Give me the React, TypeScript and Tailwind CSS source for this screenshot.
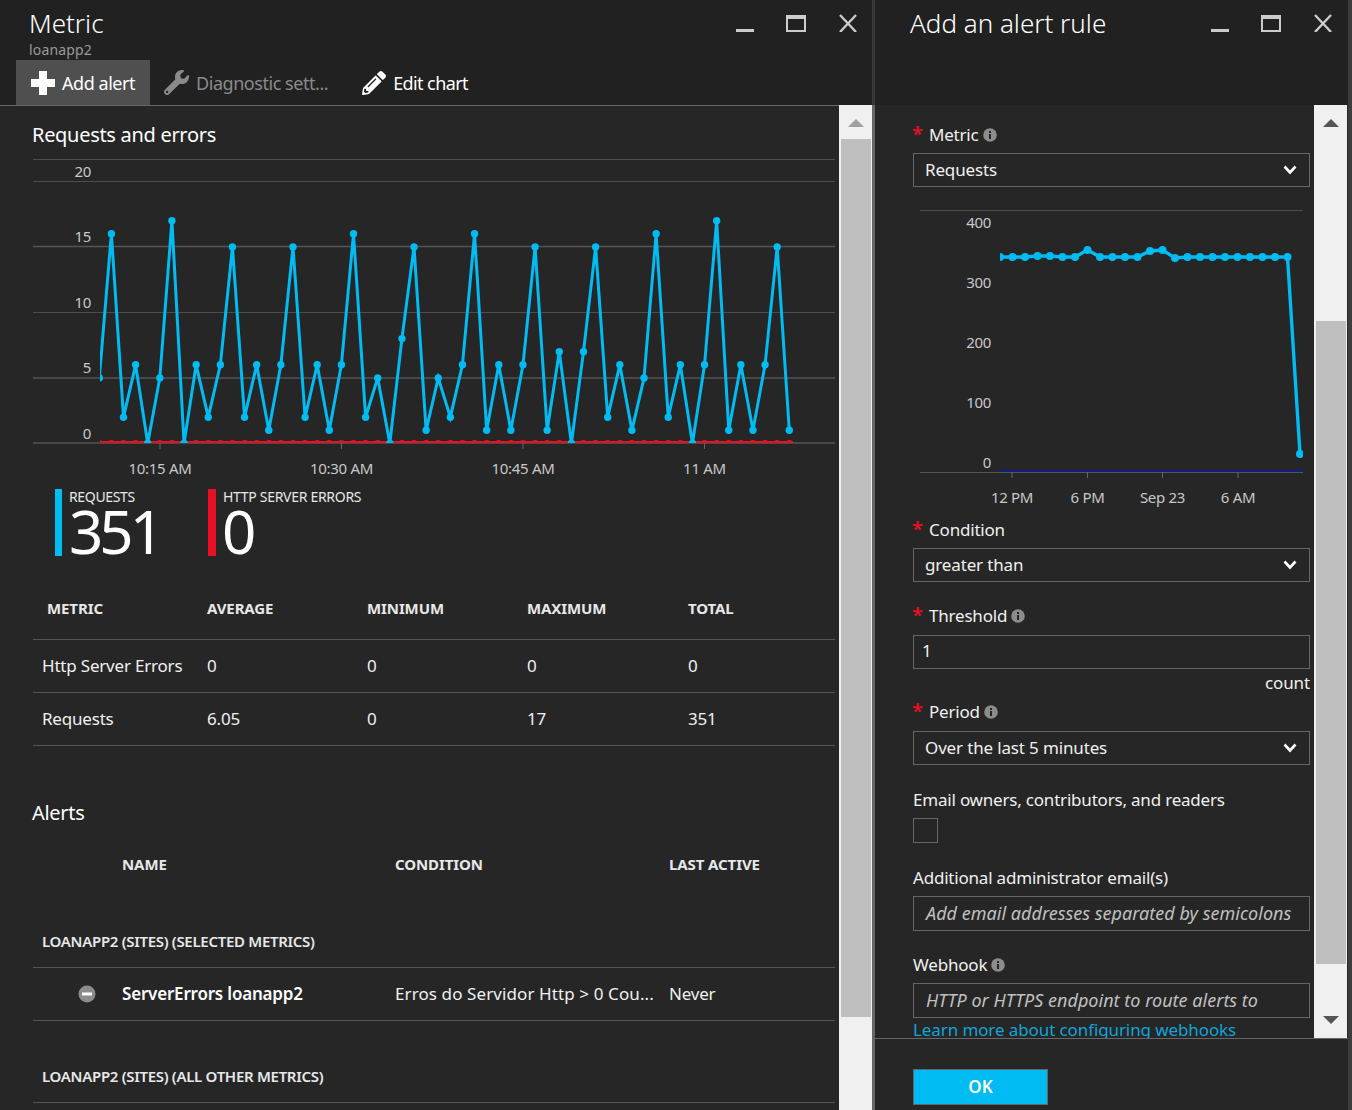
import { FaPencilAlt, FaWrench } from "react-icons/fa";

const requests = [
  5, 16, 2, 6, 0, 5, 17, 0, 6, 2, 6, 15, 2, 6, 1, 6, 15, 2, 6, 1, 6, 16, 2, 5, 0, 8, 15, 1, 5, 2, 6, 16, 1, 6, 1, 6, 15,
  1, 7, 0, 7, 15, 2, 6, 1, 5, 16, 2, 6, 0, 6, 17, 1, 6, 1, 6, 15, 1,
];

const ruleY = [257, 257, 257, 256, 256, 257, 257, 250, 257, 257, 257, 257, 251, 250, 258, 257, 257, 257, 257, 257, 257, 257, 257, 257, 454];

const metricRows = [
  ["Http Server Errors", "0", "0", "0", "0"],
  ["Requests", "6.05", "0", "17", "351"],
];

function RequestsChart() {
  const pts = requests.map((v, i) => ({ x: 99.3 + i * 12.105, y: 443.4 - v * 13.1 }));
  return (
    <svg viewBox="33 155 802 325" width={802} height={325} className="block">
      <defs>
        <clipPath id="plot">
          <rect x="100" y="155" width="735" height="288" />
        </clipPath>
      </defs>
      {[159, 181, 312].map((y) => (
        <line key={y} x1="33" x2="835" y1={y + 0.5} y2={y + 0.5} stroke="#4d4d4d" />
      ))}
      {[246.5, 378, 443].map((y) => (
        <line key={y} x1="33" x2="835" y1={y} y2={y} stroke="#555" strokeWidth="1.5" />
      ))}
      {[160, 341.5, 523, 704.5].map((x) => (
        <line key={x} x1={x} x2={x} y1="443" y2="449" stroke="#666" />
      ))}
      {[
        ["20", 177],
        ["15", 242],
        ["10", 308],
        ["5", 373],
        ["0", 439],
      ].map(([t, y]) => (
        <text key={t} x="91" y={y} textAnchor="end" fontSize="15" letterSpacing="-0.3" fill="#c8c8c8">
          {t}
        </text>
      ))}
      {[
        ["10:15 AM", 160],
        ["10:30 AM", 341.5],
        ["10:45 AM", 523],
        ["11 AM", 704.5],
      ].map(([t, x]) => (
        <text key={t} x={x} y="473.5" textAnchor="middle" fontSize="15" fill="#c8c8c8" letterSpacing="-0.3">
          {t}
        </text>
      ))}
      <g clipPath="url(#plot)">
        <line x1="100" x2="793" y1="442" y2="442" stroke="#e81123" strokeWidth="2" />
        {pts.map((p, i) => (
          <circle key={i} cx={p.x} cy="443.4" r="3.5" fill="#e81123" />
        ))}
        <polyline points={pts.map((p) => `${p.x},${p.y}`).join(" ")} fill="none" stroke="#00bcf2" strokeWidth="3" />
        {pts.map((p, i) => (
          <circle key={i} cx={p.x} cy={p.y} r="3.7" fill="#00bcf2" />
        ))}
      </g>
    </svg>
  );
}

function RuleChart() {
  const pts = ruleY.map((y, i) => ({ x: 1000 + i * 12.5, y }));
  return (
    <svg viewBox="913 205 397 305" width={397} height={305} className="block">
      <defs>
        <clipPath id="ruleplot">
          <rect x="1000" y="205" width="303" height="270" />
        </clipPath>
      </defs>
      <line x1="920" x2="1303" y1="210.5" y2="210.5" stroke="#4d4d4d" />
      <line x1="920" x2="1303" y1="472.5" y2="472.5" stroke="#555" />
      <line x1="1000" x2="1303" y1="471" y2="471" stroke="#0f1c8a" strokeWidth="2" />
      {[1012, 1087.5, 1162.5, 1238].map((x) => (
        <line key={x} x1={x} x2={x} y1="472" y2="478" stroke="#666" />
      ))}
      {[
        ["400", 228],
        ["300", 288],
        ["200", 348],
        ["100", 408],
        ["0", 468],
      ].map(([t, y]) => (
        <text key={t} x="991" y={y} textAnchor="end" fontSize="15" letterSpacing="-0.3" fill="#c8c8c8">
          {t}
        </text>
      ))}
      {[
        ["12 PM", 1012],
        ["6 PM", 1087.5],
        ["Sep 23", 1162.5],
        ["6 AM", 1238],
      ].map(([t, x]) => (
        <text key={t} x={x} y="502.5" textAnchor="middle" fontSize="15" fill="#c8c8c8" letterSpacing="-0.3">
          {t}
        </text>
      ))}
      <g clipPath="url(#ruleplot)">
        <polyline points={pts.map((p) => `${p.x},${p.y}`).join(" ")} fill="none" stroke="#00bcf2" strokeWidth="3.4" />
        {pts.map((p, i) => (
          <circle key={i} cx={p.x} cy={p.y} r="4" fill="#00bcf2" />
        ))}
      </g>
    </svg>
  );
}

function WindowControls() {
  return (
    <div className="flex items-start">
      <svg width="18" height="32" className="block" fill="#cccccc">
        <rect x="0" y="29" width="18" height="3" />
      </svg>
      <svg width="20" height="32" className="ml-[32px] block">
        <rect x="0" y="15" width="20" height="17" fill="#cccccc" />
        <rect x="2" y="19" width="16" height="11" fill="#212121" />
      </svg>
      <svg width="18" height="32" className="ml-[33px] block" stroke="#cccccc" strokeWidth="2.4">
        <line x1="1" y1="15" x2="17" y2="32" />
        <line x1="17" y1="15" x2="1" y2="32" />
      </svg>
    </div>
  );
}

function Scrollbar({ arrow, thumbTop, thumbHeight, thumbX }: { arrow: string; thumbTop: string; thumbHeight: string; thumbX: string }) {
  return (
    <div className="flex h-full w-[33px] shrink-0 flex-col bg-[#f0f0f0]">
      <svg width="16" height="8" className="mt-[14px] ml-[9px] block shrink-0" fill={arrow}>
        <polygon points="0,8 8,0 16,8" />
      </svg>
      <div className={`${thumbTop} ${thumbHeight} ${thumbX} w-[30px] shrink-0 bg-[#bfbfbf]`} />
    </div>
  );
}

function Info() {
  return (
    <svg width="14" height="14" viewBox="0 0 14 14" className="ml-[4px] block shrink-0">
      <circle cx="7" cy="7" r="6.8" fill="#8c8c8c" />
      <rect x="6" y="6" width="2" height="5" fill="#262626" />
      <rect x="6" y="3" width="2" height="2" fill="#262626" />
    </svg>
  );
}

function Label({ text, required, info, className }: { text: string; required?: boolean; info?: boolean; className: string }) {
  return (
    <div className={`${className} flex h-[20px] items-center text-[17px] leading-[20px] tracking-[-0.2px] text-[#f0f0f0]`}>
      {required && <span className="relative -top-[1px] -left-[1px] w-[16px] text-[20px] leading-none font-semibold text-[#e81123]">*</span>}
      {text}
      {info && <Info />}
    </div>
  );
}

function Select({ value, className }: { value: string; className: string }) {
  return (
    <div className={`${className} flex h-[34px] items-center justify-between border border-[#666] pr-[12px] pl-[11px] text-[17px] tracking-[-0.15px] text-[#f0f0f0]`}>
      {value}
      <svg width="14" height="10" fill="none" stroke="#ffffff" strokeWidth="2.6" className="block">
        <polyline points="1.5,1.5 7,7.5 12.5,1.5" />
      </svg>
    </div>
  );
}

function Placeholder({ text, className }: { text: string; className: string }) {
  return (
    <div className={`${className} flex h-[35px] items-center border border-[#666] pl-[12px] text-[18px] tracking-[0.02px] text-[#c0c0c0] italic`}>
      {text}
    </div>
  );
}

export default function App() {
  return (
    <div className="flex h-screen w-full overflow-hidden bg-[#3d3d3d] font-['Noto_Sans','Open_Sans',sans-serif] text-[#f0f0f0]">
      {/* Metric blade */}
      <div className="flex w-[872px] shrink-0 flex-col bg-[#262626]">
        <div className="flex h-[105px] shrink-0 justify-between bg-[#212121]">
          <div className="flex flex-col pl-[16px]">
            <div className="mt-[6px] ml-[13px] text-[26px] leading-[34px] font-light text-white">Metric</div>
            <div className="mt-[1px] ml-[13px] text-[14px] leading-[18px] tracking-[0.15px] text-[#9a9a9a]">loanapp2</div>
            <div className="mt-[1px] flex h-[45px] items-center text-[18px] tracking-[-0.45px]">
              <div className="flex h-full w-[134px] items-center bg-[#4f4f4f] pl-[15px] text-white">
                <svg width="24" height="24" fill="#ffffff" className="block">
                  <rect x="8" y="0" width="8" height="24" />
                  <rect x="0" y="8" width="24" height="8" />
                </svg>
                <span className="ml-[7px] pt-[2px]">Add alert</span>
              </div>
              <FaWrench className="ml-[14px] text-[25px] text-[#8a8a8a]" />
              <span className="ml-[7px] pt-[2px] text-[#8a8a8a]">Diagnostic sett...</span>
              <FaPencilAlt className="ml-[34px] text-[24px] text-white" />
              <span className="ml-[7px] pt-[2px] tracking-[-0.6px] text-white">Edit chart</span>
            </div>
          </div>
          <div className="pr-[15px]">
            <WindowControls />
          </div>
        </div>
        <div className="flex min-h-0 flex-1">
          <div className="w-[839px] shrink-0 overflow-hidden border-t border-[#666]">
            <h2 className="mt-[15px] ml-[32px] text-[20px] leading-[28px] tracking-[-0.3px] text-white">Requests and errors</h2>
            <div className="mt-[6px] ml-[33px]">
              <RequestsChart />
            </div>
            <div className="mt-[9px] ml-[55px] flex h-[67px]">
              <div className="flex w-[153px]">
                <div className="h-full w-[7px] bg-[#00bcf2]" />
                <div className="ml-[7px]">
                  <div className="h-[16px] text-[14px] leading-[16px] tracking-[-0.35px] text-[#e8e8e8]">REQUESTS</div>
                  <div className="text-[60px] leading-[52px] tracking-[-4px] text-white">351</div>
                </div>
              </div>
              <div className="flex">
                <div className="h-full w-[8px] bg-[#e81123]" />
                <div className="ml-[7px]">
                  <div className="h-[16px] whitespace-nowrap text-[14px] leading-[16px] tracking-[-0.3px] text-[#e8e8e8]">HTTP SERVER ERRORS</div>
                  <div className="-ml-[1px] text-[60px] leading-[52px] tracking-[-4px] text-white">0</div>
                </div>
              </div>
            </div>
            <table className="ml-[33px] w-[802px] table-fixed text-left">
              <thead>
                <tr className="border-b border-[#555] text-[15px] tracking-[-0.1px] text-[#e8e8e8]">
                  <th className="h-[83px] w-[174px] pt-[41px] pl-[14px] align-top font-bold">METRIC</th>
                  <th className="w-[160px] pt-[41px] align-top font-bold">AVERAGE</th>
                  <th className="w-[160px] pt-[41px] align-top font-bold">MINIMUM</th>
                  <th className="w-[161px] pt-[41px] align-top font-bold">MAXIMUM</th>
                  <th className="pt-[41px] align-top font-bold">TOTAL</th>
                </tr>
              </thead>
              <tbody>
                {metricRows.map((row) => (
                  <tr key={row[0]} className="h-[53px] border-b border-[#555] text-[17px] tracking-[-0.2px]">
                    {row.map((cell, i) => (
                      <td key={i} className={i === 0 ? "pl-[9px]" : ""}>
                        {cell}
                      </td>
                    ))}
                  </tr>
                ))}
              </tbody>
            </table>
            <h2 className="mt-[53px] ml-[32px] text-[20px] leading-[28px] tracking-[-0.3px] text-white">Alerts</h2>
            <table className="ml-[33px] w-[802px] table-fixed text-left">
              <thead>
                <tr className="text-[15px] tracking-[-0.1px] text-[#e8e8e8]">
                  <th className="h-[63px] w-[89px]" />
                  <th className="w-[273px] pt-[26px] align-top font-bold">NAME</th>
                  <th className="w-[274px] pt-[26px] align-top font-bold">CONDITION</th>
                  <th className="pt-[26px] align-top font-bold">LAST ACTIVE</th>
                </tr>
              </thead>
              <tbody>
                <tr className="border-b border-[#555]">
                  <td colSpan={4} className="h-[78px] pt-[41px] pl-[9px] align-top text-[15px] leading-[20px] font-semibold tracking-[-0.3px] text-[#e8e8e8]">
                    LOANAPP2 (SITES) (SELECTED METRICS)
                  </td>
                </tr>
                <tr className="h-[53px] border-b border-[#555] text-[17px] tracking-[-0.2px]">
                  <td>
                    <svg width="18" height="18" className="ml-[45px] block">
                      <circle cx="9" cy="9" r="8.5" fill="#8c8c8c" />
                      <rect x="4" y="7.5" width="10" height="3" fill="#ffffff" />
                    </svg>
                  </td>
                  <td className="font-semibold text-white">ServerErrors loanapp2</td>
                  <td className="whitespace-nowrap tracking-[0.1px]">Erros do Servidor Http &gt; 0 Cou...</td>
                  <td>Never</td>
                </tr>
                <tr className="border-b border-[#555]">
                  <td colSpan={4} className="h-[82px] pt-[45px] pl-[9px] align-top text-[15px] leading-[20px] font-semibold tracking-[-0.3px] text-[#e8e8e8]">
                    LOANAPP2 (SITES) (ALL OTHER METRICS)
                  </td>
                </tr>
              </tbody>
            </table>
          </div>
          <Scrollbar arrow="#a0a0a0" thumbTop="mt-[12px]" thumbHeight="h-[878px]" thumbX="ml-[2px]" />
        </div>
      </div>
      <div className="flex w-[3px] shrink-0 flex-col bg-[#666]">
        <div className="h-[105px] bg-[#383838]" />
      </div>

      {/* Add an alert rule blade */}
      <div className="flex w-[473px] shrink-0 flex-col bg-[#262626]">
        <div className="flex h-[105px] shrink-0 justify-between bg-[#212121]">
          <div className="mt-[6px] ml-[35px] text-[26px] leading-[34px] font-light text-white">Add an alert rule</div>
          <div className="pr-[16px]">
            <WindowControls />
          </div>
        </div>
        <div className="flex h-[933px] shrink-0">
          <div className="w-[439px] shrink-0 overflow-hidden pr-[4px] pl-[38px]">
            <Label className="mt-[20px]" text="Metric" required info />
            <Select className="mt-[8px]" value="Requests" />
            <div className="mt-[18px]">
              <RuleChart />
            </div>
            <Label className="mt-[10px]" text="Condition" required />
            <Select className="mt-[8px]" value="greater than" />
            <Label className="mt-[24px]" text="Threshold" required info />
            <div className="mt-[9px] flex h-[34px] items-center border border-[#666] pb-[2px] pl-[8px] text-[17px]">1</div>
            <div className="mt-[4px] h-[20px] text-right text-[17px] leading-[20px] tracking-[-0.1px]">count</div>
            <Label className="mt-[9px]" text="Period" required info />
            <Select className="mt-[9px]" value="Over the last 5 minutes" />
            <Label className="mt-[25px]" text="Email owners, contributors, and readers" />
            <div className="mt-[8px] h-[25px] w-[25px] border border-[#666]" />
            <Label className="mt-[25px]" text="Additional administrator email(s)" />
            <Placeholder className="mt-[8px]" text="Add email addresses separated by semicolons" />
            <Label className="mt-[24px]" text="Webhook" info />
            <Placeholder className="mt-[8px]" text="HTTP or HTTPS endpoint to route alerts to" />
            <div className="mt-[2px] text-[17px] leading-[20px] tracking-[-0.1px] text-[#0ea5d8]">Learn more about configuring webhooks</div>
          </div>
          <div className="relative">
            <Scrollbar arrow="#555555" thumbTop="mt-[194px]" thumbHeight="h-[643px]" thumbX="ml-[2px]" />
            <svg width="16" height="8" fill="#555555" className="absolute top-[911px] left-[9px] block">
              <polygon points="0,0 16,0 8,8" />
            </svg>
          </div>
        </div>
        <div className="flex-1 border-t border-[#666] pt-[30px] pl-[38px]">
          <button className="h-[36px] w-[135px] border border-[#666] bg-[#00bcf2] text-[17px] font-semibold text-white">OK</button>
        </div>
      </div>
    </div>
  );
}
